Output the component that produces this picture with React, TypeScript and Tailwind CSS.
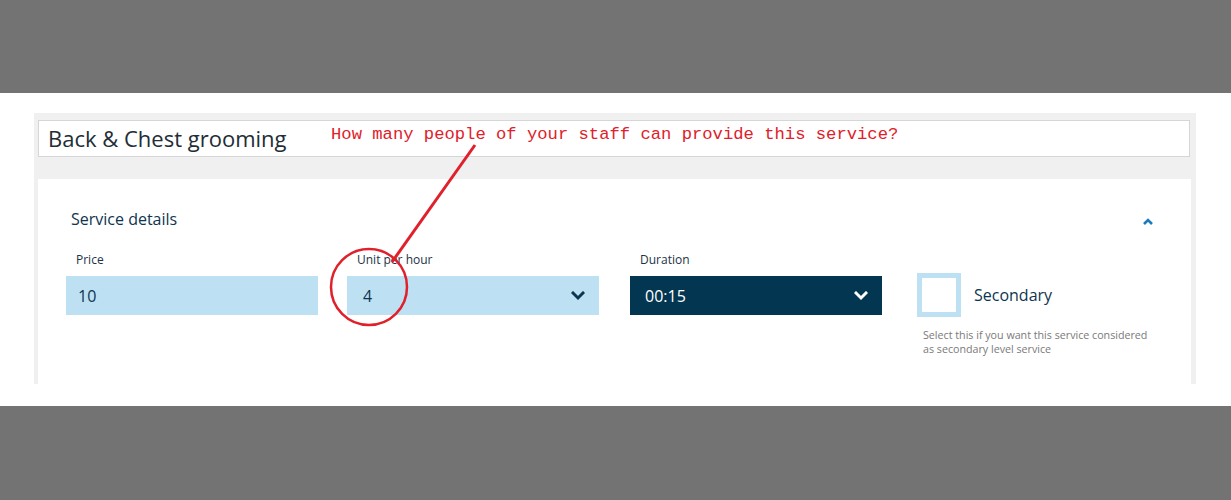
import React from "react";

function Chevron({ color }: { color: string }) {
  return (
    <svg width="14" height="10" viewBox="0 0 14 10" className="shrink-0">
      <polyline points="2,2 7,7 12,2" fill="none" stroke={color} strokeWidth="3" strokeLinecap="square" />
    </svg>
  );
}

function Field({ label, children }: { label: string; children: React.ReactNode }) {
  return (
    <div className="flex flex-col w-[252px]">
      <span className="text-[12px] leading-[16px] text-[#1c3346] pl-[10px] mb-[8px]">{label}</span>
      {children}
    </div>
  );
}

export default function App() {
  return (
    <div className="w-[1231px] h-[500px] bg-[#737373] flex flex-col" style={{ fontFamily: '"Open Sans", sans-serif' }}>
      <div className="h-[93px] shrink-0" />
      <div className="relative h-[313px] bg-white pt-[20px] pl-[34px] shrink-0">
        <div className="w-[1162px] h-[271px] bg-[#f0f0f0] pl-[4px] pr-[5px] pt-[7px] flex flex-col">
          {/* Title */}
          <div className="h-[37px] bg-white border border-[#d6d6d6] flex items-center pl-[9px] mr-[1px]">
            <span className="text-[22px] text-[#222d35]">Back &amp; Chest grooming</span>
          </div>
          {/* Card */}
          <div className="mt-[22px] flex-1 bg-white px-[28px] pt-[29px]">
            <div className="flex items-center justify-between pl-[5px] pr-[9px]">
              <span className="text-[16px] leading-[22px] text-[#0e3550]">Service details</span>
              <svg width="12" height="8" viewBox="0 0 12 8" className="mt-[6px]">
                <polyline points="2,6 6,2 10,6" fill="none" stroke="#1a7bbf" strokeWidth="2.6" />
              </svg>
            </div>
            <div className="flex mt-[22px]">
              <Field label="Price">
                <div className="h-[39px] bg-[#bee0f3] flex items-center px-[12px] text-[16px] text-[#0e3550]">10</div>
              </Field>
              <div className="ml-[29px]">
                <Field label="Unit per hour">
                  <div className="h-[39px] bg-[#bee0f3] flex items-center justify-between pl-[16px] pr-[14px] text-[16px] text-[#0e3550]">
                    <span>4</span>
                    <Chevron color="#0e3550" />
                  </div>
                </Field>
              </div>
              <div className="ml-[31px]">
                <Field label="Duration">
                  <div className="h-[39px] bg-[#023651] flex items-center justify-between pl-[15px] pr-[14px] text-[16px] text-white">
                    <span>00:15</span>
                    <Chevron color="#ffffff" />
                  </div>
                </Field>
              </div>
              <div className="ml-[35px] pt-[21px] flex flex-col">
                <div className="flex items-center">
                  <div className="w-[44px] h-[44px] border-[5px] border-[#bee0f3] bg-white" />
                  <span className="ml-[13px] text-[16px] text-[#0e3550]">Secondary</span>
                </div>
                <p className="mt-[11px] ml-[6px] text-[10.7px] leading-[14px] text-[#7a7a7a]">
                  Select this if you want this service considered
                  <br />
                  as secondary level service
                </p>
              </div>
            </div>
          </div>
        </div>

        {/* Annotation */}
        <span
          className="absolute left-[331px] top-[31px] text-[17.2px] leading-[22px] text-[#e0202a]"
          style={{ fontFamily: '"Liberation Mono", monospace' }}
        >
          How many people of your staff can provide this service?
        </span>
        <svg className="absolute left-0 top-0 pointer-events-none" width="1231" height="313">
          <line x1="475" y1="52" x2="392" y2="169" stroke="#e0202a" strokeWidth="3" />
          <circle cx="369" cy="194" r="38" fill="none" stroke="#e0202a" strokeWidth="2.5" />
        </svg>
      </div>
      <div className="flex-1" />
    </div>
  );
}
